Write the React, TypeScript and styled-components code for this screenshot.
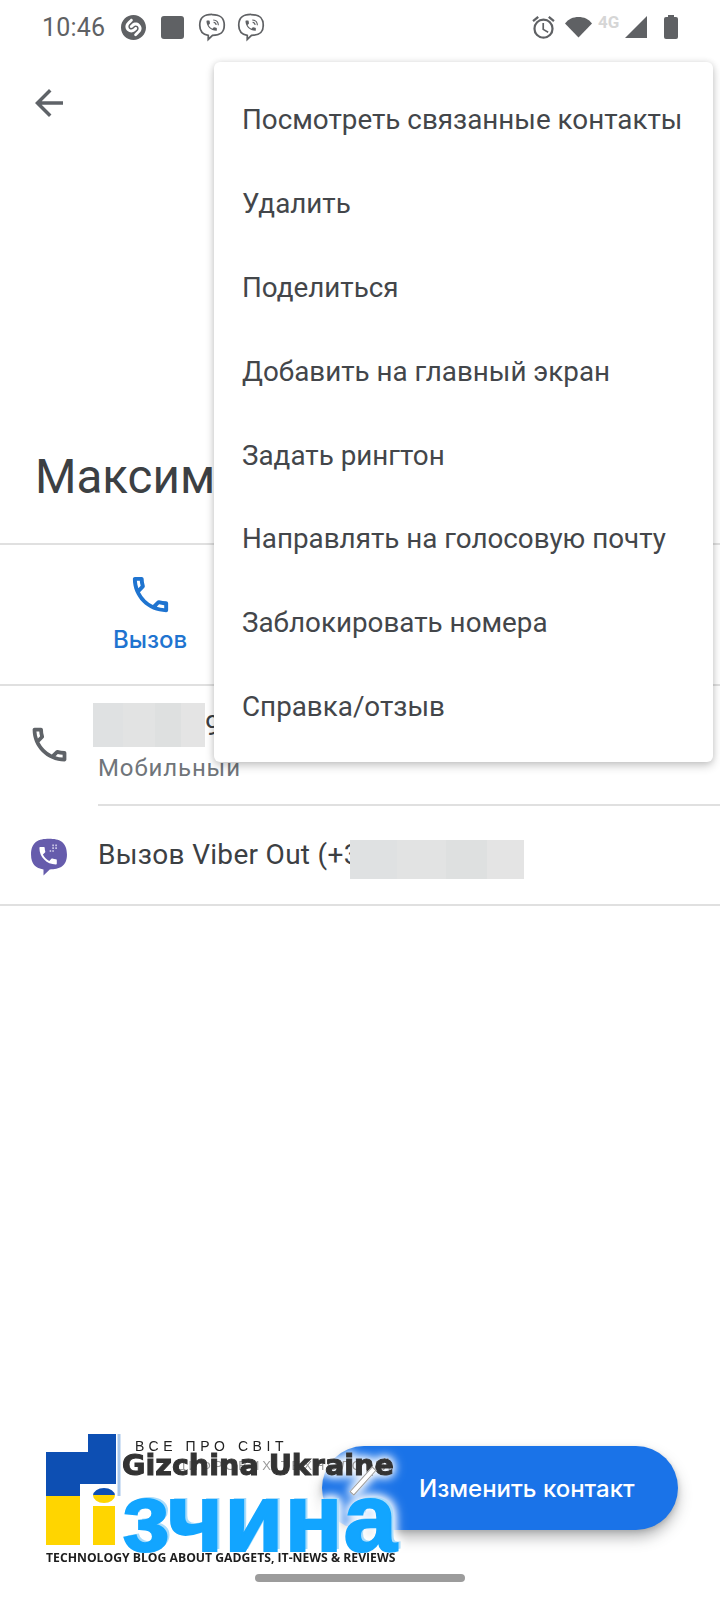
import React from "react";
import styled, { createGlobalStyle } from "styled-components";
import { MdArrowBack, MdOutlinePhone, MdOutlineAlarm } from "react-icons/md";
import { SiShazam } from "react-icons/si";

const PHONE =
  "M6.62 10.79c1.44 2.83 3.76 5.14 6.59 6.59l2.2-2.2c.27-.27.67-.36 1.02-.24 1.12.37 2.33.57 3.57.57.55 0 1 .45 1 1V20c0 .55-.45 1-1 1-9.39 0-17-7.61-17-17 0-.55.45-1 1-1h3.5c.55 0 1 .45 1 1 0 1.25.2 2.45.57 3.57.11.35.03.74-.25 1.02l-2.2 2.2z";
const BUBBLE =
  "M12 2c5.6 0 9.8 1.6 9.8 8.6 0 6.6-4.2 8-9.4 8.1L9 22v-3.3C4.800 18 2.200 16 2.200 10.600 2.200 3.600 6.400 2 12 2z";

const Global = createGlobalStyle`
  html, body { margin: 0; padding: 0; background: #fff; }
  * { box-sizing: border-box; }
  body { font-family: Roboto, "Liberation Sans", sans-serif; }
`;

const Screen = styled.div`
  position: relative;
  width: 720px;
  height: 1600px;
  overflow: hidden;
  background: #fff;
  display: flex;
  flex-direction: column;
  color: #3c4043;
`;

const StatusBar = styled.div`
  height: 56px;
  padding: 0 42px 2px 42px;
  display: flex;
  align-items: center;
  justify-content: space-between;
  color: #5f6164;
`;

const StatusGroup = styled.div`
  display: flex;
  align-items: center;
`;

const Clock = styled.span`
  font-size: 25px;
  width: 79px;
  letter-spacing: 0.2px;
`;

const StopSquare = styled.span`
  width: 23px;
  height: 23px;
  border-radius: 3px;
  background: #5f6164;
  margin: 0 13px 0 15px;
`;

const StatusViber = styled.svg`
  width: 30px;
  height: 30px;
  margin-right: 9px;
  fill: none;
  stroke: #5f6164;
`;

const FourG = styled.span`
  font-family: "Roboto", sans-serif;
  font-weight: 700;
  font-size: 17px;
  color: #d6d6d6;
  margin: -11px -1px 0 5px;
  width: 28px;
`;

const Battery = styled.span`
  position: relative;
  width: 14px;
  height: 22px;
  margin: 2px 0 0 17px;
  border-radius: 2px;
  background: #5f6164;
  &::before {
    content: "";
    position: absolute;
    left: 4px;
    top: -2px;
    width: 6px;
    height: 3px;
    background: #5f6164;
  }
`;

const TopBar = styled.div`
  height: 94px;
  padding-left: 28px;
  display: flex;
  align-items: center;
  color: #5f6368;
`;

const Hero = styled.div`
  height: 395px;
  padding: 0 0 34px 35px;
  display: flex;
  align-items: flex-end;
  border-bottom: 2px solid #e0e0e0;
`;

const Name = styled.h1`
  margin: 0;
  font-weight: 400;
  font-size: 47.5px;
  line-height: 64px;
  color: #3c4043;
`;

const Actions = styled.div`
  height: 141px;
  border-bottom: 2px solid #e0e0e0;
  display: flex;
`;

const Action = styled.div`
  width: 300px;
  display: flex;
  flex-direction: column;
  align-items: center;
  padding-top: 26px;
  color: #1f74d0;
`;

const ActionLabel = styled.span`
  font-family: Inter, Roboto, sans-serif;
  font-weight: 500;
  font-size: 24px;
  line-height: 30px;
  margin-top: 7px;
`;

const ContactRow = styled.div<{ $h: number }>`
  height: ${(p) => p.$h}px;
  display: flex;
`;

const RowIcon = styled.div<{ $pt: number; $pl: number }>`
  width: 98px;
  padding: ${(p) => p.$pt}px 0 0 ${(p) => p.$pl}px;
  color: #5f6368;
  flex: none;
`;

const RowBody = styled.div`
  flex: 1;
  min-width: 0;
  display: flex;
  flex-direction: column;
`;

const NumberLine = styled.div`
  height: 44px;
  margin: 17px 0 0 -5px;
  display: flex;
  align-items: center;
  font-size: 28px;
  white-space: nowrap;
`;

const Redacted = styled.span<{ $w: number; $h: number }>`
  display: inline-block;
  flex: none;
  width: ${(p) => p.$w}px;
  height: ${(p) => p.$h}px;
  background: linear-gradient(
    90deg,
    #dfe1e2 0 27%,
    #e2e3e3 27% 55%,
    #dee0e0 55% 79%,
    #e4e4e4 79% 100%
  );
`;

const SubLabel = styled.div`
  font-size: 24px;
  line-height: 30px;
  margin-top: 6px;
  letter-spacing: 0.9px;
  color: #70757a;
`;

const RowRule = styled.div`
  margin-top: auto;
  height: 2px;
  background: #e0e0e0;
`;

const ViberLine = styled.div`
  display: flex;
  align-items: flex-start;
  padding-top: 32px;
  font-size: 28px;
  line-height: 34px;
  letter-spacing: 0.3px;
  color: #3c4043;
  white-space: nowrap;
`;

const ViberRedacted = styled(Redacted)`
  margin: 2px 0 0 -10px;
  position: relative;
`;

const FullRule = styled.div`
  height: 2px;
  background: #e0e0e0;
`;

const Menu = styled.div`
  position: absolute;
  top: 62px;
  left: 214px;
  width: 499px;
  height: 700px;
  padding: 16px 0;
  background: #fff;
  border-radius: 6px;
  box-shadow: 0 4px 10px rgba(0, 0, 0, 0.2), 0 0 6px rgba(0, 0, 0, 0.1);
  display: flex;
  flex-direction: column;
`;

const MenuItem = styled.div`
  height: 83.8px;
  flex: none;
  display: flex;
  align-items: center;
  padding-left: 28px;
  font-size: 27.8px;
  color: #43464a;
  white-space: nowrap;
`;

const Fab = styled.div`
  position: absolute;
  left: 322px;
  top: 1446px;
  width: 356px;
  height: 84px;
  border-radius: 42px;
  background: #1a73e8;
  box-shadow: 0 8px 14px rgba(60, 64, 67, 0.35), 0 2px 5px rgba(60, 64, 67, 0.2);
  color: #fff;
  display: flex;
  align-items: center;
  padding-left: 97px;
  font-family: Inter, Roboto, sans-serif;
  font-weight: 500;
  font-size: 24px;
`;

const Home = styled.div`
  position: absolute;
  left: 255px;
  top: 1574px;
  width: 210px;
  height: 8px;
  border-radius: 4px;
  background: #9c9c9c;
`;

const Logo = styled.div`
  position: absolute;
  left: 46px;
  top: 1434px;
  width: 352px;
  height: 132px;
  filter: drop-shadow(0 0 5px #fff) drop-shadow(0 0 5px #fff);
`;

const LogoFlag = styled.svg`
  position: absolute;
  left: 0;
  top: 0;
  width: 76px;
  height: 112px;
`;

const LogoI = styled.span`
  position: absolute;
  left: 47px;
  top: 54px;
  width: 22px;
  height: 57px;
  display: flex;
  flex-direction: column;
  align-items: center;
`;

const LogoDot = styled.span`
  width: 22px;
  height: 15px;
  border-radius: 50%;
  background: linear-gradient(#0d4fb3 50%, #ffd500 50%);
`;

const LogoStem = styled.span`
  width: 22px;
  flex: 1;
  margin-top: 3px;
  background: #ffd500;
`;

const LogoTop = styled.span`
  position: absolute;
  left: 89px;
  top: 5px;
  font-family: "Liberation Sans", sans-serif;
  font-size: 14px;
  line-height: 14px;
  letter-spacing: 4.6px;
  color: #222;
  white-space: nowrap;
`;

const LogoFaint = styled.span`
  position: absolute;
  left: 130px;
  top: 25px;
  font-family: "Liberation Sans", sans-serif;
  font-size: 13px;
  line-height: 14px;
  letter-spacing: 3px;
  color: #9a9a9a;
  white-space: nowrap;
`;

const LogoBrand = styled.span`
  position: absolute;
  left: 76px;
  top: 13px;
  font-family: "DejaVu Sans", sans-serif;
  font-weight: 700;
  font-size: 28.6px;
  line-height: 36px;
  color: #333;
  -webkit-text-stroke: 1px #333;
  white-space: nowrap;
`;

const LogoWord = styled.span`
  position: absolute;
  left: 76px;
  top: 37px;
  font-family: "Liberation Sans", sans-serif;
  font-weight: 700;
  font-size: 96px;
  line-height: 94px;
  letter-spacing: 1.2px;
  color: #12a5ff;
  -webkit-text-stroke: 2px #12a5ff;
  text-shadow: 3px -2px 0 #a9dcfb;
  white-space: nowrap;
`;

const LogoAccent = styled.span`
  position: absolute;
  left: 300px;
  top: 44px;
  width: 34px;
  height: 6px;
  background: #fff;
  border: 1px solid #9a9a9a;
  transform: rotate(-48deg);
`;

const LogoTagline = styled.span`
  position: absolute;
  left: 0;
  top: 116px;
  font-family: "Open Sans", sans-serif;
  font-weight: 700;
  font-size: 12.2px;
  line-height: 15px;
  color: #1d1d1d;
  white-space: nowrap;
`;

const ViberStatusIcon = () => (
  <StatusViber viewBox="0 0 24 24" strokeWidth={1.4}>
    <path d={BUBBLE} />
    <path d={PHONE} fill="#5f6164" stroke="none" transform="translate(6.2 5.4) scale(0.46)" />
    <path d="M13 6.400c2.400.1 4 1.800 4.100 4.200M13.300 8.300c1.200.1 1.900.9 2 2.100" strokeWidth={0.9} />
  </StatusViber>
);

const ViberLogo = () => (
  <svg width="40" height="42" viewBox="0 0 24 25">
    <path d={BUBBLE} fill="#665cac" transform="translate(-1.200 -0.600) scale(1.100)" />
    <path d={PHONE} fill="#fff" transform="translate(4.500 4.800) scale(0.58)" />
    <path d="M14 5.500h.9M15.800 5.500h.9M15.800 7.200h.9M14 7.200h.9M12.400 8.900h.9M14 8.900h.9" stroke="#d9d6ee" strokeWidth={1} />
  </svg>
);

const menuItems = [
  "Посмотреть связанные контакты",
  "Удалить",
  "Поделиться",
  "Добавить на главный экран",
  "Задать рингтон",
  "Направлять на голосовую почту",
  "Заблокировать номера",
  "Справка/отзыв",
];

export default function App() {
  return (
    <Screen>
      <Global />
      <StatusBar>
        <StatusGroup>
          <Clock>10:46</Clock>
          <SiShazam size={25} />
          <StopSquare />
          <ViberStatusIcon />
          <ViberStatusIcon />
        </StatusGroup>
        <StatusGroup>
          <MdOutlineAlarm size={27} />
          <svg width="29" height="22" viewBox="0 0 29 22" style={{ marginLeft: 7 }}>
            <path d="M14.500 21.500 1 7.500C4.500 3 9 1 14.500 1S24.500 3 28 7.500z" fill="#5f6164" />
          </svg>
          <FourG>4G</FourG>
          <svg width="22" height="22" viewBox="0 0 22 22">
            <path d="M22 0v22H0z" fill="#5f6164" />
          </svg>
          <Battery />
        </StatusGroup>
      </StatusBar>

      <TopBar>
        <MdArrowBack size={42} />
      </TopBar>

      <Hero>
        <Name>Максим</Name>
      </Hero>

      <Actions>
        <Action>
          <MdOutlinePhone size={47} />
          <ActionLabel>Вызов</ActionLabel>
        </Action>
      </Actions>

      <ContactRow $h={120}>
        <RowIcon $pt={36} $pl={27}>
          <MdOutlinePhone size={45} />
        </RowIcon>
        <RowBody>
          <NumberLine>
            <Redacted $w={112} $h={44} />
            9
          </NumberLine>
          <SubLabel>Мобильный</SubLabel>
          <RowRule />
        </RowBody>
      </ContactRow>

      <ContactRow $h={98}>
        <RowIcon $pt={30} $pl={29}>
          <ViberLogo />
        </RowIcon>
        <RowBody>
          <ViberLine>
            Вызов Viber Out (+3
            <ViberRedacted $w={174} $h={39} />
          </ViberLine>
        </RowBody>
      </ContactRow>
      <FullRule />

      <Fab>Изменить контакт</Fab>

      <Logo>
        <LogoFlag viewBox="0 0 76 112">
          <path d="M71.500 0h3v62h-3z" fill="#a9c7ea" />
          <path d="M42 0h28v50H34v12H0V18h42z" fill="#0d4fb3" />
          <path d="M0 62h34v49H0z" fill="#ffd500" />
        </LogoFlag>
        <LogoI>
          <LogoDot />
          <LogoStem />
        </LogoI>
        <LogoTop>ВСЕ ПРО СВІТ</LogoTop>
        <LogoFaint>ЦИФРОВИХ ТЕХНОЛОГІЙ</LogoFaint>
        <LogoBrand>Gizchina Ukraine</LogoBrand>
        <LogoWord>зчина</LogoWord>
        <LogoAccent />
        <LogoTagline>TECHNOLOGY BLOG ABOUT GADGETS, IT-NEWS &amp; REVIEWS</LogoTagline>
      </Logo>

      <Home />

      <Menu>
        {menuItems.map((t) => (
          <MenuItem key={t}>{t}</MenuItem>
        ))}
      </Menu>
    </Screen>
  );
}
